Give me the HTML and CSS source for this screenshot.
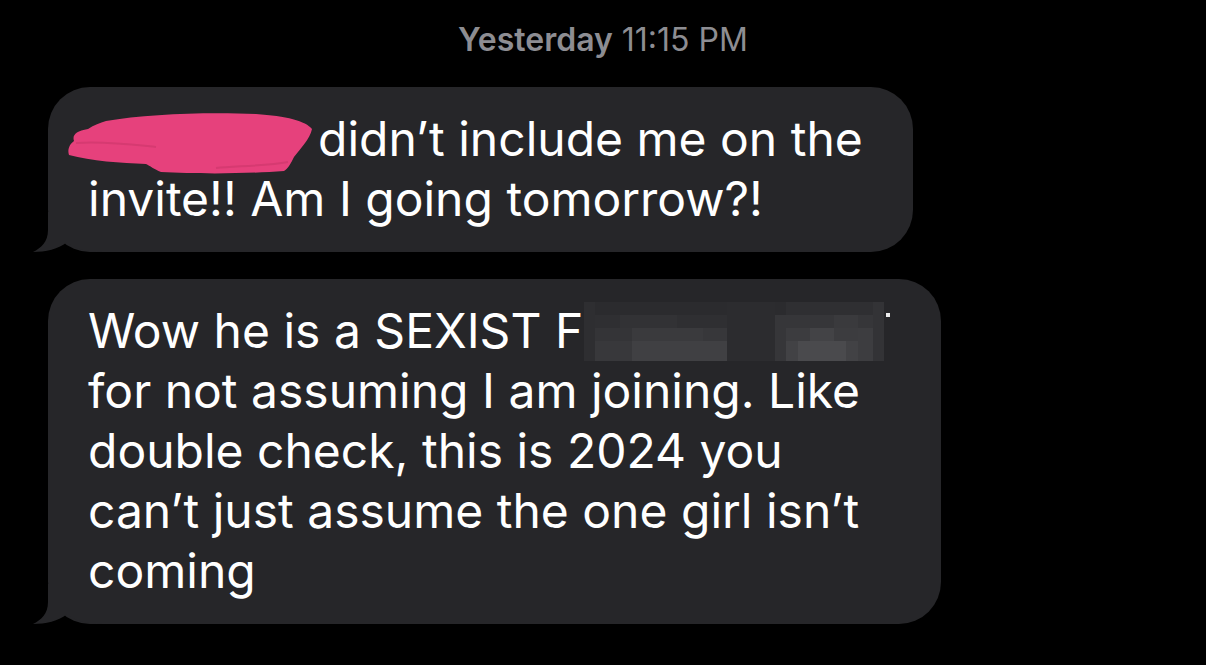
FILE: index.html
```html
<!DOCTYPE html>
<html lang="en">
<head>
    <meta charset="UTF-8">
    <meta name="viewport" content="width=device-width, initial-scale=1.0">
    <title>Messages</title>
    <link rel="stylesheet" href="styles.css">
</head>
<body>
    <div class="timestamp"><span class="day">Yesterday</span> 11:15 PM</div>

    <div class="thread">
        <div class="bubble">
            <svg class="tail" width="70" height="40" viewBox="0 0 70 40">
                <path d="M15 0 H70 V40 C55 40 42 37 34 30 C26 37 12 40 0 40 C8 36 15 30 15 18 Z" fill="#262629"/>
            </svg>
            <span class="redact">
                <svg class="scribble" width="250" height="64" viewBox="0 0 250 64">
                    <path d="M40 10 C80 3 140 1 190 3 C220 5 240 10 246 18 C244 28 234 38 228 46 C225 52 222 58 218 60 C180 63 130 63 95 61 C88 58 84 55 80 53 C55 52 25 50 3 44 C1 38 4 33 8 30 C6 24 10 20 22 18 C28 14 34 12 40 10 Z" fill="#e6417c"/>
                    <path d="M10 32 C40 30 70 34 90 36" stroke="#d63a71" stroke-width="2" fill="none"/>
                    <path d="M150 57 C170 55 200 55 222 51" stroke="#d63a71" stroke-width="2" fill="none"/>
                </svg>
            </span>didn’t include me on the<br>
            invite!! Am I going tomorrow?!
        </div>

        <div class="bubble">
            <svg class="tail" width="70" height="40" viewBox="0 0 70 40">
                <path d="M15 0 H70 V40 C55 40 42 37 34 30 C26 37 12 40 0 40 C8 36 15 30 15 18 Z" fill="#262629"/>
            </svg>
            Wow he is a SEXIST F<span class="pixelated">
                <svg width="307" height="60" viewBox="0 0 307 60">
                    <rect x="0" y="1" width="300" height="60" fill="#2b2b2e"/>
                    <rect x="0" y="14" width="300" height="46" fill="#2f2f32"/>
                    <rect x="0" y="27" width="300" height="33" fill="#343437"/>
                    <rect x="0" y="40" width="300" height="20" fill="#38383b"/>
                    <rect x="36" y="14" width="57" height="13" fill="#323235"/>
                    <rect x="48" y="27" width="71" height="13" fill="#3a3a3d"/>
                    <rect x="48" y="40" width="95" height="20" fill="#404043"/>
                    <rect x="119" y="27" width="24" height="13" fill="#37373a"/>
                    <rect x="143" y="1" width="48" height="59" fill="#2c2c2f"/>
                    <rect x="191" y="14" width="11" height="46" fill="#363639"/>
                    <rect x="202" y="1" width="98" height="13" fill="#2f2f32"/>
                    <rect x="202" y="14" width="98" height="13" fill="#363639"/>
                    <rect x="202" y="27" width="98" height="13" fill="#3c3c3f"/>
                    <rect x="202" y="40" width="98" height="20" fill="#424245"/>
                    <rect x="214" y="40" width="48" height="20" fill="#4a4a4d"/>
                    <rect x="226" y="27" width="24" height="13" fill="#434346"/>
                    <rect x="250" y="14" width="24" height="13" fill="#3a3a3d"/>
                    <rect x="274" y="27" width="26" height="33" fill="#3d3d40"/>
                    <rect x="0" y="1" width="11" height="59" fill="#2e2e31"/>
                    <rect x="289" y="1" width="11" height="59" fill="#333336"/>
                    <rect x="302" y="12" width="4" height="4" fill="#ececec"/>
                </svg>
            </span><br>
            for not assuming I am joining. Like<br>
            double check, this is 2024 you<br>
            can’t just assume the one girl isn’t<br>
            coming
        </div>
    </div>
</body>
</html>
```

FILE: styles.css
```css
* {
    box-sizing: border-box;
}

body {
    margin: 0;
    background-color: #000;
    font-family: Inter, "Noto Sans", sans-serif;
    height: 665px;
    overflow: hidden;
}

.timestamp {
    padding-top: 21px;
    line-height: 38px;
    text-align: center;
    color: #8d8d92;
    font-size: 32px;
}

.day {
    font-weight: 600;
}

.thread {
    display: flex;
    flex-direction: column;
    align-items: flex-start;
    gap: 27px;
    padding: 28px 0 0 48px;
}

.bubble {
    position: relative;
    z-index: 0;
    background-color: #262629;
    color: #fff;
    font-size: 48px;
    line-height: 60px;
    padding: 22px 50px 23px 40px;
    border-radius: 42px;
}

.redact {
    display: inline-block;
    position: relative;
    width: 230px;
    height: 60px;
    vertical-align: top;
}

.scribble {
    position: absolute;
    left: -22px;
    top: 2px;
}

.pixelated {
    display: inline-block;
    height: 60px;
    vertical-align: top;
    margin-left: 1px;
}

.pixelated svg {
    display: block;
}

.tail {
    position: absolute;
    z-index: -1;
    left: -15px;
    bottom: 0;
}
```
